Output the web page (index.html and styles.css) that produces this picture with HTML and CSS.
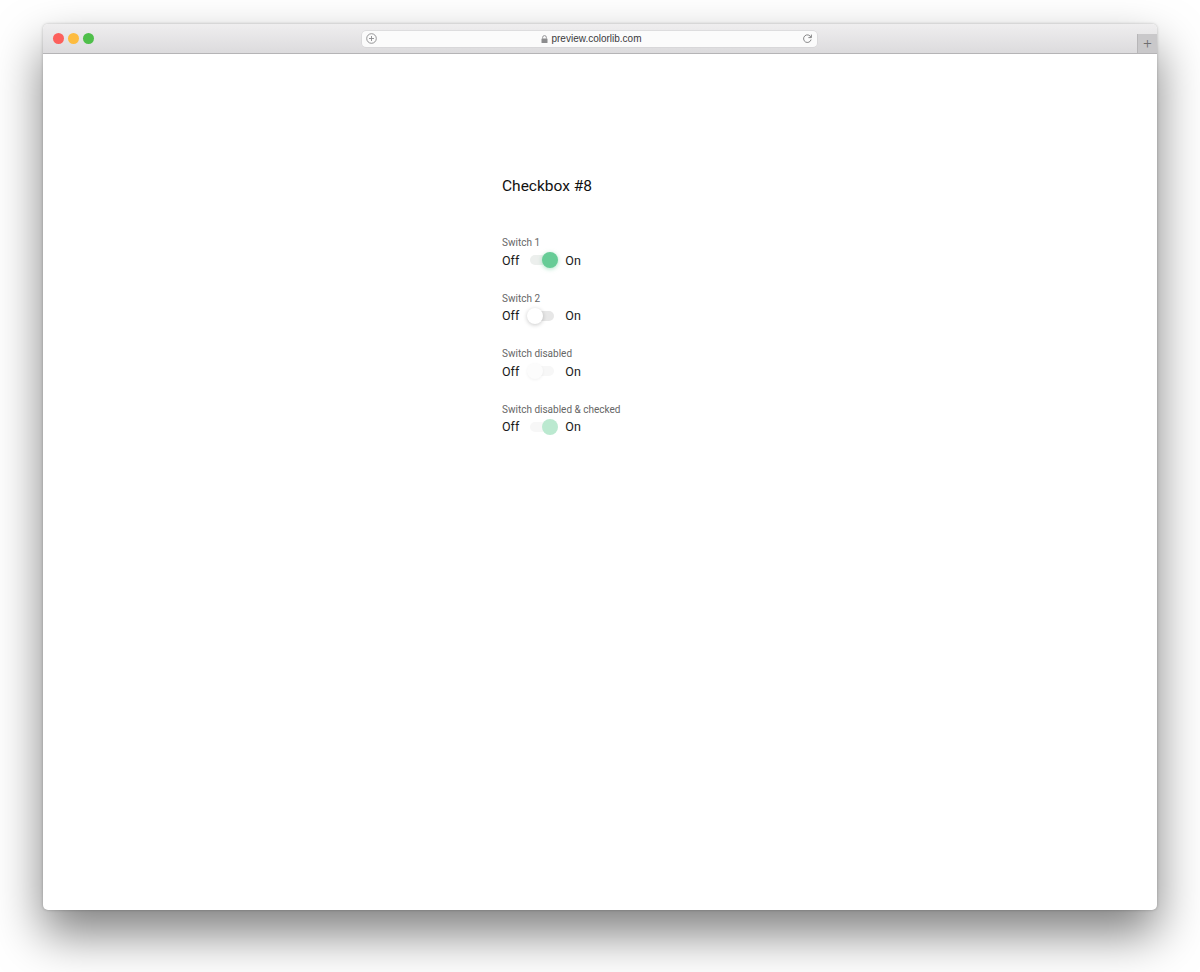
FILE: index.html
```html
<!DOCTYPE html>
<html lang="en">
<head>
    <meta charset="UTF-8">
    <meta name="viewport" content="width=device-width, initial-scale=1.0">
    <title>Checkbox #8</title>
    <link rel="stylesheet" href="styles.css">
</head>
<body>
    <div class="window">
        <div class="titlebar">
            <div class="lights">
                <span class="light red"></span>
                <span class="light yellow"></span>
                <span class="light green"></span>
            </div>
            <div class="address">
                <svg class="addr-plus" width="11" height="11" viewBox="0 0 11 11">
                    <circle cx="5.5" cy="5.5" r="4.8" fill="none" stroke="#8a8a8c" stroke-width="0.9"/>
                    <path d="M5.5 3v5M3 5.5h5" stroke="#8a8a8c" stroke-width="0.9"/>
                </svg>
                <div class="url">
                    <svg width="7" height="8" viewBox="0 0 7 8">
                        <path d="M1.6 3.6V2.5a1.9 1.9 0 0 1 3.8 0v1.1" fill="none" stroke="#8c8c8e" stroke-width="0.9"/>
                        <rect x="0.5" y="3.5" width="6" height="4.5" rx="0.6" fill="#8c8c8e"/>
                    </svg>
                    <span>preview.colorlib.com</span>
                </div>
                <svg class="reload" width="11" height="11" viewBox="0 0 11 11">
                    <path d="M8.9 4.2A3.8 3.8 0 1 0 9.1 6.5" fill="none" stroke="#7a7a7c" stroke-width="0.9"/>
                    <path d="M9.4 1.6v3H6.4" fill="none" stroke="#7a7a7c" stroke-width="0.9"/>
                </svg>
            </div>
            <div class="newtab">+</div>
        </div>

        <div class="page">
            <div class="demo">
                <h2 class="title">Checkbox #8</h2>

                <div class="group">
                    <div class="caption">Switch 1</div>
                    <label class="switch">
                        Off
                        <input type="checkbox" checked>
                        <span class="lever"></span>
                        On
                    </label>
                </div>

                <div class="group">
                    <div class="caption">Switch 2</div>
                    <label class="switch">
                        Off
                        <input type="checkbox">
                        <span class="lever"></span>
                        On
                    </label>
                </div>

                <div class="group">
                    <div class="caption">Switch disabled</div>
                    <label class="switch">
                        Off
                        <input type="checkbox" disabled>
                        <span class="lever"></span>
                        On
                    </label>
                </div>

                <div class="group">
                    <div class="caption">Switch disabled &amp; checked</div>
                    <label class="switch">
                        Off
                        <input type="checkbox" checked disabled>
                        <span class="lever"></span>
                        On
                    </label>
                </div>
            </div>
        </div>
    </div>
</body>
</html>
```

FILE: styles.css
```css
body {
    margin: 0;
    background-color: #fff;
    font-family: Roboto, "Noto Sans", Arial, sans-serif;
    height: 972px;
    overflow: hidden;
}

.window {
    margin: 24px 43px 0;
    width: 1114px;
    height: 886px;
    background-color: #fff;
    border-radius: 5px;
    box-shadow: 0 24px 48px rgba(0, 0, 0, 0.5), 0 0 3px rgba(0, 0, 0, 0.25);
    overflow: hidden;
    display: flex;
    flex-direction: column;
}

.titlebar {
    height: 29px;
    flex-shrink: 0;
    background: linear-gradient(#efeeef, #dcdbdd);
    border-bottom: 1px solid #b5b4b6;
    display: flex;
    align-items: center;
    position: relative;
}

.lights {
    display: flex;
    gap: 4px;
    margin-left: 10px;
}

.light {
    width: 11px;
    height: 11px;
    border-radius: 50%;
}

.light.red { background-color: #fc605c; }
.light.yellow { background-color: #fdbc40; }
.light.green { background-color: #4fbf4a; }

.address {
    margin-left: 268px;
    width: 455px;
    height: 16px;
    background-color: #fbfbfb;
    border-radius: 4px;
    box-shadow: 0 0 0 0.5px #d0cfd1;
    display: flex;
    align-items: center;
    padding: 0 4px;
    box-sizing: border-box;
}

.addr-plus {
    flex-shrink: 0;
}

.url {
    flex: 1;
    display: flex;
    align-items: center;
    justify-content: center;
    gap: 3px;
    font-size: 10px;
    color: #3a3a3c;
    font-family: "Liberation Sans", Arial, sans-serif;
    padding-left: 4px;
}

.newtab {
    position: absolute;
    right: 0;
    top: 10px;
    width: 19px;
    height: 19px;
    background-color: #c9c8ca;
    border-left: 1px solid #b7b6b8;
    color: #6e6e70;
    font-size: 15px;
    font-weight: 300;
    line-height: 19px;
    text-align: center;
}

.page {
    flex: 1;
}

.demo {
    margin-left: 459px;
    padding-top: 122px;
}

.title {
    margin: 0 0 40px;
    font-size: 15.5px;
    font-weight: 400;
    line-height: 20px;
    color: #111;
}

.group {
    margin-bottom: 21.5px;
}

.caption {
    font-size: 10px;
    line-height: 14px;
    color: #666;
}

.switch {
    display: flex;
    align-items: center;
    height: 20px;
    font-size: 12.5px;
    color: #1a1a1a;
}

.switch input {
    display: none;
}

.lever {
    position: relative;
    width: 24px;
    height: 10px;
    margin: 0 11px;
    border-radius: 5px;
    background-color: #e7e7e7;
}

.lever::after {
    content: "";
    position: absolute;
    left: -3px;
    top: -3px;
    width: 16px;
    height: 16px;
    border-radius: 50%;
    background-color: #fff;
    box-shadow: 0 1px 4px rgba(0, 0, 0, 0.22);
}

.switch input:checked + .lever {
    background-color: #ecefed;
}

.switch input:checked + .lever::after {
    left: 12px;
    background-color: #66cc96;
    box-shadow: 0 1px 4px rgba(102, 204, 150, 0.55);
}

.switch input:disabled + .lever {
    background-color: #f7f7f7;
}

.switch input:disabled + .lever::after {
    background-color: #fcfcfc;
    box-shadow: 0 1px 3px rgba(0, 0, 0, 0.06);
}

.switch input:checked:disabled + .lever::after {
    background-color: #bbe9d0;
    box-shadow: none;
}
```
